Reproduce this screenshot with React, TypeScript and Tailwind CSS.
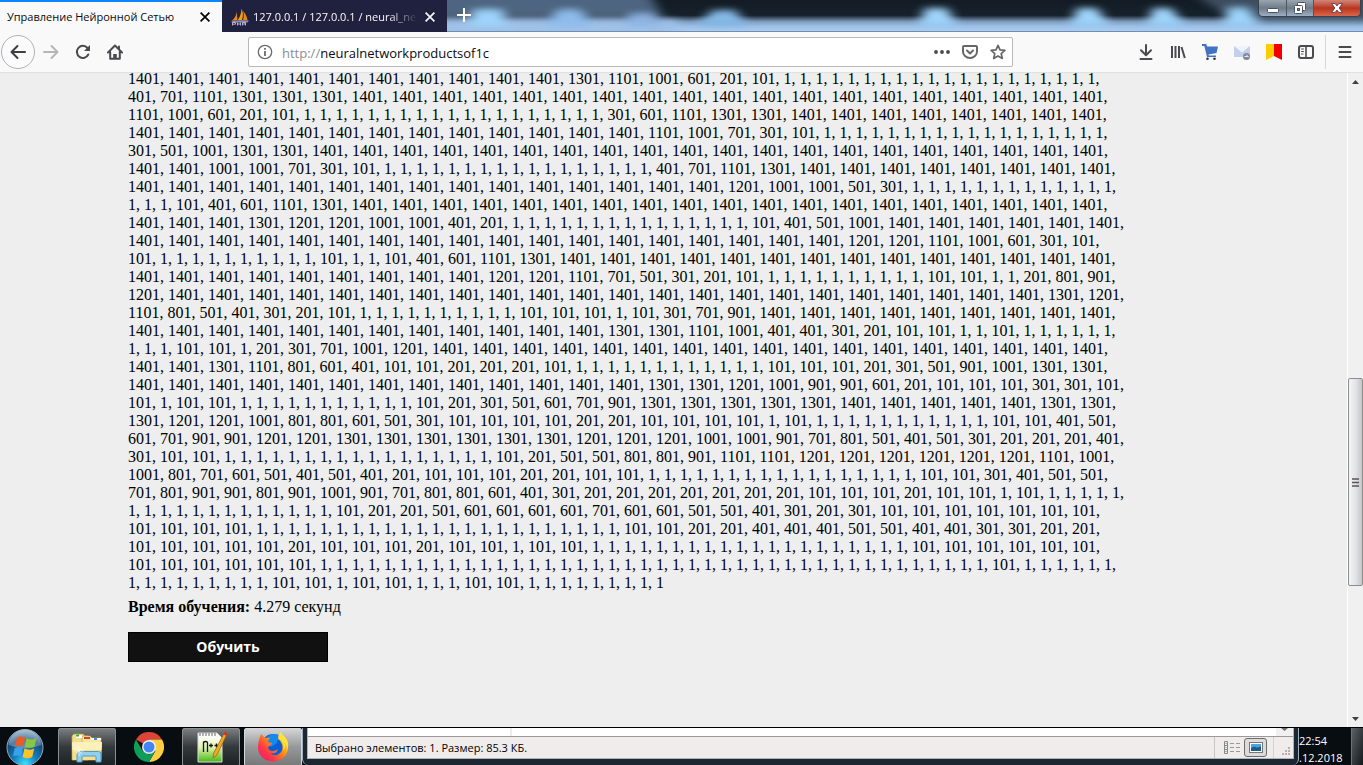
import type { ReactNode } from "react";

type Run = [value: number, count?: number];

const runs: Run[] = [
  [1401, 11], [1301], [1101], [1001], [601], [201], [101], [1, 20],
  [401], [701], [1101], [1301, 3], [1401, 19],
  [1101], [1001], [601], [201], [101], [1, 19], [301], [601], [1101], [1301, 2], [1401, 8],
  [1401, 13], [1101], [1001], [701], [301], [101], [1, 18],
  [301], [501], [1001], [1301, 2], [1401, 20],
  [1401, 2], [1001, 2], [701], [301], [101], [1, 17], [401], [701], [1101], [1301], [1401, 8],
  [1401, 15], [1201], [1001, 2], [501], [301], [1, 13],
  [1, 3], [101], [401], [601], [1101], [1301], [1401, 19],
  [1401, 3], [1301], [1201, 2], [1001, 2], [401], [201], [1, 15], [101], [401], [501], [1001], [1401, 6],
  [1401, 18], [1201, 2], [1101], [1001], [601], [301], [101],
  [101], [1, 10], [101], [1, 2], [101], [401], [601], [1101], [1301], [1401, 14],
  [1401, 9], [1201, 2], [1101], [701], [501], [301], [201], [101], [1, 10], [101, 2], [1, 2], [201], [801], [901],
  [1201], [1401, 22], [1301], [1201],
  [1101], [801], [501], [401], [301], [201], [101], [1, 10], [101, 3], [1], [101], [301], [701], [901], [1401, 9],
  [1401, 12], [1301, 2], [1101], [1001], [401, 2], [301], [201], [101, 2], [1, 2], [101], [1, 6],
  [1, 3], [101, 2], [1], [201], [301], [701], [1001], [1201], [1401, 17],
  [1401, 2], [1301], [1101], [801], [601], [401], [101, 2], [201, 3], [101], [1, 12], [101, 3], [201], [301], [501], [901], [1001], [1301, 2],
  [1401, 13], [1301, 2], [1201], [1001], [901, 2], [601], [201], [101, 3], [301, 2], [101],
  [101], [1], [101, 2], [1, 11], [101], [201], [301], [501], [601], [701], [901], [1301, 5], [1401, 5], [1301, 2],
  [1301], [1201, 2], [1001], [801, 2], [601], [501], [301], [101, 4], [201, 2], [101, 4], [1], [101], [1, 11], [101, 2], [401], [501],
  [601], [701], [901, 2], [1201, 2], [1301, 6], [1201, 3], [1001, 2], [901], [701], [801], [501], [401], [501], [301], [201, 3], [401],
  [301], [101, 2], [1, 17], [101], [201], [501, 2], [801, 2], [901], [1101, 2], [1201, 6], [1101], [1001],
  [1001], [801], [701], [601], [501], [401], [501], [401], [201], [101, 3], [201, 2], [101, 2], [1, 17], [101, 2], [301], [401], [501, 2],
  [701], [801], [901, 2], [801], [901], [1001], [901], [701], [801, 2], [601], [401], [301], [201, 7], [101, 3], [201], [101, 2], [1], [101], [1, 5],
  [1, 13], [101], [201, 2], [501], [601, 4], [701], [601, 2], [501, 2], [401], [301], [201], [301], [101, 7],
  [101, 4], [1, 23], [101, 2], [201, 2], [401, 3], [501, 2], [401, 2], [301, 2], [201, 2],
  [101, 5], [201], [101, 3], [201], [101, 2], [1], [101, 2], [1, 20], [101, 6],
  [101, 6], [1, 42], [101], [1, 6],
  [1, 9], [101, 2], [1], [101, 2], [1, 3], [101, 2], [1, 9],
];

const values = runs.flatMap(([value, count = 1]) => Array<number>(count).fill(value)).join(", ");

function CloseIcon() {
  return (
    <svg viewBox="0 0 10 10" className="size-[10px]" fill="none" stroke="currentColor" strokeWidth="1.7">
      <path d="M.6.6 9.4 9.4M9.4.6.6 9.4" />
    </svg>
  );
}

function Wallpaper() {
  return (
    <svg className="absolute inset-0 h-full w-full" viewBox="0 0 916 32" preserveAspectRatio="none" aria-hidden="true">
      <defs>
        <linearGradient id="glass" x1="0" y1="0" x2="0" y2="1">
          <stop offset="0" stopColor="#131c25" />
          <stop offset=".48" stopColor="#16212b" />
          <stop offset=".68" stopColor="#7f9fc0" />
          <stop offset=".82" stopColor="#9cc0e8" />
          <stop offset="1" stopColor="#b0cff0" />
        </linearGradient>
        <filter id="soft" x="-50%" y="-50%" width="200%" height="200%">
          <feGaussianBlur stdDeviation="6 3" />
        </filter>
      </defs>
      <rect width="916" height="32" fill="url(#glass)" />
      <g filter="url(#soft)">
        <path d="M-20-10H200L216 18H-20Z" fill="#4d6580" />
        <rect x="-20" y="20" width="250" height="20" fill="#9fc1e8" />
        <path d="M740-10H930V22H790Z" fill="#50657a" opacity=".7" />
        <g fill="#9ed4fb">
          <path d="m22 26 6-16h26l6 16z" />
          <path d="m98 26 14-16h20l14 16z" fill="#8dbbeb" />
          <path d="m176 26 8-12h22l10 12z" fill="#8db4e2" />
          <path d="m250 26 16-16h22l12 16z" fill="#84b9e6" />
          <path d="m472 26 6-18h22l10 18z" />
          <path d="m624 26 6-18h20l12 18z" />
          <path d="m700 26 6-18h18l14 18z" />
          <path d="m776 26 6-18h18l12 18z" />
        </g>
      </g>
      <rect y="31" width="916" height="1" fill="#6f8fb0" />
    </svg>
  );
}

function WindowButtons() {
  return (
    <div className="relative ml-auto mr-[2px] flex h-[17px] overflow-hidden rounded-b-[5px] border border-t-0 border-[#39434f]">
      <button aria-label="Свернуть" className="flex w-7 items-center justify-center border-r border-[#4b5663] bg-linear-to-b from-[#9aa5b1] via-[#6f7b89] to-[#9db0c4]">
        <svg viewBox="0 0 12 5" className="mt-1 h-[5px] w-3">
          <rect x=".5" y=".5" width="11" height="4" rx="1" fill="#fff" stroke="#4a5260" />
        </svg>
      </button>
      <button aria-label="Восстановить" className="flex w-[27px] items-center justify-center border-r border-[#4b5663] bg-linear-to-b from-[#9aa5b1] via-[#6f7b89] to-[#9db0c4]">
        <svg viewBox="0 0 12 12" className="size-3" fill="#fff" stroke="#4a5260">
          <rect x="3.5" y=".5" width="8" height="8" rx="1" />
          <rect x=".5" y="3.5" width="8" height="8" rx="1" />
          <rect x="3.5" y="6.5" width="2" height="2" fill="#7d8b9a" />
        </svg>
      </button>
      <button aria-label="Закрыть" className="flex w-[46px] items-center justify-center bg-linear-to-b from-[#cf8678] via-[#b8341c] to-[#d9664c]">
        <svg viewBox="0 0 12 10" className="h-[10px] w-3">
          <path d="M.6.6h3.6L6 2.9 7.8.6h3.6L8.2 5l3.2 4.400H7.800L6 7.100 4.200 9.400H.6L3.800 5z" fill="#fff" stroke="#5c3a40" strokeWidth=".9" />
        </svg>
      </button>
    </div>
  );
}

function TitleBar() {
  return (
    <header className="flex h-8 shrink-0">
      <div className="flex w-[222px] shrink-0 items-center justify-between border-t-2 border-[#0a84ff] bg-[#f9f9fa] pl-[7px] pr-3">
        <span className="whitespace-nowrap text-[11px] leading-4 text-[#0c0c0d]">Управление Нейронной Сетью</span>
        <button aria-label="Закрыть вкладку"><CloseIcon /></button>
      </div>
      <div className="flex w-[225px] shrink-0 items-center bg-[#20213f] pl-2 pr-3 pt-[2px] text-[#f9f9fa]">
        <svg viewBox="0 0 20 18" className="h-[18px] w-5 shrink-0" aria-hidden="true">
          <path d="M6.500 1.500c.6 4-.6 7.500-4.700 11.500l5.700-1z" fill="#e5871f" />
          <path d="M11.500.5c1.500 3.500 2 7 .5 11.500H7.800c2.600-3.700 3.500-7 3.700-11.500z" fill="#f89c0e" />
          <path d="M13 3c2.500 2.500 4 5.500 4.500 9H13c1-3 1-6 0-9z" fill="#e98412" />
          <path d="M1 13.500c5-1.500 12-1.500 18-1l-1.500 2H2z" fill="#8d8fae" />
          <path d="M2.500 17.500v-3h3v1.700h-3m5 1.300v-3m0 1.500h3m0-1.500v3m2 0v-3h3v3m-3-1.500h3" fill="none" stroke="#b5b6cc" />
        </svg>
        <span className="ml-[3px] min-w-0 flex-1 overflow-hidden whitespace-nowrap text-[11px] font-medium leading-4 [mask-image:linear-gradient(to_right,#000_82%,transparent)]">
          127.0.0.1 / 127.0.0.1 / neural_net
        </span>
        <button aria-label="Закрыть вкладку" className="ml-[7px]"><CloseIcon /></button>
      </div>
      <div className="relative flex flex-1 items-start overflow-hidden">
        <Wallpaper />
        <button aria-label="Новая вкладка" className="relative ml-[10px] mt-2">
          <svg viewBox="0 0 14 14" className="size-[14px]" stroke="#fff" strokeWidth="2">
            <path d="M7 0v14M0 7h14" />
          </svg>
        </button>
        <WindowButtons />
      </div>
    </header>
  );
}

function ToolButton({ label, className = "w-8", children }: { label: string; className?: string; children: ReactNode }) {
  return (
    <button aria-label={label} className={`flex h-8 shrink-0 items-center justify-center text-[#4a4a4f] ${className}`}>
      <svg viewBox="0 0 16 16" className="size-4" fill="none" stroke="currentColor" strokeWidth="2" strokeLinecap="round" strokeLinejoin="round">
        {children}
      </svg>
    </button>
  );
}

function Toolbar() {
  return (
    <nav className="flex h-[41px] shrink-0 items-center border-b border-[#e0e0e1] bg-[#f9f9fa]">
      <button aria-label="Назад" className="ml-px flex size-[34px] shrink-0 items-center justify-center rounded-full border border-[#b1b1b3] bg-[#fbfbfb] text-[#3d3d42]">
        <svg viewBox="0 0 16 16" className="size-4" fill="none" stroke="currentColor" strokeWidth="2" strokeLinecap="round" strokeLinejoin="round">
          <path d="M15 8H1.500M7.500 2 1.500 8l6 6" />
        </svg>
      </button>
      <ToolButton label="Вперёд"><path d="M1 8h13.500M8.500 2l6 6-6 6" stroke="#b6b6b9" /></ToolButton>
      <ToolButton label="Обновить">
        <path d="M13.300 10.500A6 6 0 1 1 12.500 4" />
        <path d="M15 1v6H9z" fill="currentColor" stroke="none" />
      </ToolButton>
      <ToolButton label="Домой">
        <path d="M1 8.500 8 1.500l7 7M3.200 8v6.800h9.600V8" />
        <path d="M6.200 15v-5h3.600v5z" fill="currentColor" stroke="none" />
        <path d="M12 2.500v2" />
      </ToolButton>

      <div className="mx-[117px] flex h-[30px] min-w-0 flex-1 items-center rounded-[2px] border border-[#b9b9bb] bg-white">
        <button aria-label="Сведения о сайте" className="ml-2 shrink-0 text-[#6a6a6e]">
          <svg viewBox="0 0 16 16" className="size-4" fill="none" stroke="currentColor" strokeWidth="1.300">
            <circle cx="8" cy="8" r="6.700" />
            <path d="M8 7v5" strokeWidth="1.800" />
            <path d="M8 4v1.800" strokeWidth="1.800" />
          </svg>
        </button>
        <label htmlFor="address" className="ml-[9px] pt-[2px] text-[13px] leading-5 text-[#8c8c90]">http://</label>
        <input
          id="address"
          className="min-w-0 flex-1 bg-transparent pt-[2px] text-[13px] leading-5 text-[#0c0c0d] outline-none"
          defaultValue="neuralnetworkproductsof1c"
        />
        <ToolButton label="Действия на странице" className="w-7">
          <g fill="currentColor" stroke="none">
            <circle cx="2" cy="8" r="1.900" /><circle cx="8" cy="8" r="1.900" /><circle cx="14" cy="8" r="1.900" />
          </g>
        </ToolButton>
        <ToolButton label="Сохранить в Pocket" className="w-7">
          <g stroke="#66666b">
            <path d="M2 2h12q1 0 1 1v4.500a7 6.500 0 0 1-14 0V3q0-1 1-1z" />
            <path d="M5 6.500l3 3 3-3" />
          </g>
        </ToolButton>
        <ToolButton label="Добавить в закладки" className="w-7">
          <path d="m8 1.300 2 4.500 4.900.5-3.700 3.300 1.100 4.900L8 12l-4.300 2.500 1.100-4.900L1.100 6.300 6 5.800z" stroke="#66666b" strokeWidth="1.700" />
        </ToolButton>
      </div>

      <ToolButton label="Загрузки"><path d="M8 1v9.500M3 6.300l5 5 5-5M2.500 15h11" /></ToolButton>
      <ToolButton label="Библиотека"><path d="M2 2v12M5.500 2v12M9 2v12M11.500 3l3.300 11" strokeLinecap="butt" /></ToolButton>
      <ToolButton label="Покупки">
        <g stroke="none">
          <path d="M0 0h4.200l1 2.500H16L14.500 9l-8 1.500.3 1H14V13H5L2.300 2H0z" fill="#4374c1" />
          <circle cx="5.500" cy="14.700" r="1.300" fill="#333" /><circle cx="12.500" cy="14.700" r="1.300" fill="#333" />
        </g>
      </ToolButton>
      <ToolButton label="Почта">
        <g stroke="none">
          <path d="M0 2h16v11H0z" fill="#c3cfec" />
          <path d="M0 2h16L8 8.500z" fill="#eff3fd" />
          <circle cx="12.500" cy="12.500" r="3.500" fill="#7e879c" />
        </g>
        <path d="M10.800 12.500h3.400M12.500 11l1.600 1.500" stroke="#e8ebf3" strokeWidth="1" />
      </ToolButton>
      <ToolButton label="Закладки">
        <g stroke="none"><path d="M0 0h8v12l-8 4z" fill="#fc0" /><path d="M8 0h8v16l-8-4z" fill="#f20000" /></g>
      </ToolButton>
      <ToolButton label="Боковая панель">
        <rect x="1" y="2" width="14" height="12" rx="2" />
        <path d="M8 2v12" strokeWidth="1.600" />
        <path d="M3.500 5h2M3.500 7.500h2M3.500 10h1.500" strokeWidth="1" />
      </ToolButton>
      <div className="ml-[3px] h-[34px] w-px shrink-0 bg-[#d7d7db]" />
      <ToolButton label="Меню" className="ml-[3px] mr-[2px] w-8">
        <path d="M2.500 3h11M2.500 8h11M2.500 13h11" />
      </ToolButton>
    </nav>
  );
}

function ScrollArrow({ down = false }: { down?: boolean }) {
  return (
    <button aria-label={down ? "Прокрутить вниз" : "Прокрутить вверх"} className="flex h-[17px] w-full shrink-0 items-center justify-center">
      <svg viewBox="0 0 7 4" className="h-1 w-[7px]" fill="#404040">
        {down ? <path d="M0 0h7L3.500 4z" /> : <path d="M0 4h7L3.500 0z" />}
      </svg>
    </button>
  );
}

function ScrollBar() {
  return (
    <div className="flex w-4 shrink-0 flex-col border-l border-white bg-[#f0f0f1]">
      <ScrollArrow />
      <div className="flex-[288]" />
      <div className="flex h-[208px] shrink-0 items-center justify-center rounded-[2px] border border-[#8e8e8f] bg-linear-to-r from-[#f4f4f5] via-[#e3e4e6] to-[#c3c5ca]">
        <svg viewBox="0 0 7 9" className="h-[9px] w-[7px]" stroke="#555" strokeWidth="1.500">
          <path d="M0 1h7M0 4.500h7M0 8h7" />
        </svg>
      </div>
      <div className="flex-[124]" />
      <ScrollArrow down />
    </div>
  );
}

function Page() {
  return (
    <div className="flex min-h-0 flex-1 bg-[#eee]">
      <main className="flex min-w-0 flex-1 flex-col justify-end overflow-hidden pb-[65px] pl-32 font-['Liberation_Serif',serif] text-[16px] leading-[18px] text-black">
        <p className="max-w-[1000px]">{values}</p>
        <p className="mt-[6px]"><b>Время обучения:</b> 4.279 секунд</p>
        <button className="mt-4 h-[30px] w-[200px] shrink-0 border border-black bg-[#111] font-['Open_Sans',sans-serif] text-[14px] font-bold leading-5 text-white">
          Обучить
        </button>
      </main>
      <ScrollBar />
    </div>
  );
}

function StartOrb() {
  return (
    <svg viewBox="0 0 38 38" className="size-[38px]" aria-hidden="true">
      <defs>
        <radialGradient id="orb" cx=".5" cy=".95" r=".95">
          <stop offset="0" stopColor="#3fe0ff" />
          <stop offset=".35" stopColor="#1380c0" />
          <stop offset=".7" stopColor="#164a78" />
          <stop offset="1" stopColor="#8fb4cd" />
        </radialGradient>
      </defs>
      <circle cx="19" cy="19.500" r="18" fill="url(#orb)" stroke="#8fa9b8" />
      <path d="M3 17a16 15 0 0 1 32 0Q19 24 3 17z" fill="#fff" opacity=".28" />
      <path d="M11 9.500q4-2 8 0l-1.800 9q-4-2-8.200-.3z" fill="#ee5a24" />
      <path d="M20.500 10.200q5 2.800 10-.2l-2 8.500q-5 2.500-9.800.3z" fill="#8bc63f" />
      <path d="M8.700 20q4-1.800 8.200.2l-1.700 8.300q-4-2-8.200-.2z" fill="#3aa0e8" />
      <path d="M18.400 20.600q5 2.400 9.800-.2l-2 8.600q-5 2.500-9.600 0z" fill="#ffc423" />
    </svg>
  );
}

function FoldersIcon() {
  return (
    <svg viewBox="0 0 34 32" className="h-8 w-[34px]" aria-hidden="true">
      <path d="M4 3h9l2 2h3v24H2V5z" fill="#f3dd8a" stroke="#c3a450" strokeWidth=".7" />
      <path d="M12 5h8l2 2h9v22H12z" fill="#f8e7a4" stroke="#c3a450" strokeWidth=".7" />
      <path d="M6 4h6v3H6z" fill="#fff" /><path d="M6 3.500h3v2H6z" fill="#36b33a" />
      <path d="M14 6h6v2h-6z" fill="#d5452e" />
      <path d="M21 7h10v2H21z" fill="#fff" /><path d="M24 7h3v2h-3z" fill="#3c8fd8" />
      <path d="M2 11h30l-1 18H3z" fill="#f5df8f" />
      <path d="M2 11h30l-.5 8H2.500z" fill="#fdf0b9" />
      <path d="M7 31V23q0-2.500 2.500-2.500h19q2.500 0 2.500 2.500v8h-5v-5q0-1-1-1H13q-1 0-1 1v5z" fill="#93cfee" stroke="#4c9cc8" />
      <path d="M9 15v10M4 20h10M6 17l6 6M12 17l-6 6" stroke="#fff" strokeWidth=".8" opacity=".8" />
    </svg>
  );
}

function ChromeIcon() {
  return (
    <svg viewBox="0 0 30 30" className="size-[30px]" aria-hidden="true">
      <path d="M15 15 2 7.500A15 15 0 0 1 28 7.500H15z" fill="#db4437" />
      <path d="M15 15 15 7.500H28A15 15 0 0 1 15 30l6.500-11.300z" fill="#ffcd40" />
      <path d="M2 7.500 8.500 18.800 15 22.500 21.500 18.700 15 30A15 15 0 0 1 2 7.500z" fill="#0f9d58" />
      <circle cx="15" cy="15" r="7" fill="#f1f1f1" />
      <circle cx="15" cy="15" r="5.500" fill="#4285f4" />
    </svg>
  );
}

function NotepadIcon() {
  return (
    <svg viewBox="0 0 32 32" className="size-8" aria-hidden="true">
      <defs>
        <linearGradient id="pad" x1="0" y1="0" x2="0" y2="1">
          <stop offset=".1" stopColor="#fff" /><stop offset=".5" stopColor="#e0f3ae" /><stop offset="1" stopColor="#46b814" />
        </linearGradient>
      </defs>
      <path d="M3 2h19l5 5v24H3z" fill="url(#pad)" stroke="#d8dcd4" />
      <path d="M5 2v3M8 2v3M11 2v3M14 2v3M17 2v3M20 2v3" stroke="#666" />
      <path d="M8.500 21V10.500M8.500 12q0-1.500 2-1.500t2 1.500v9" fill="none" stroke="#151515" strokeWidth="1.300" />
      <path d="M14 14.500h4M16 12.500v4M19.500 14.500h4M21.500 12.500v4" fill="none" stroke="#151515" strokeWidth="1.300" />
      <path d="M29.500 1.500 32 3 22 24l-4 3 .5-4.500z" fill="#f1a922" stroke="#8b5b10" strokeWidth=".7" />
      <path d="m28.500 3 1.500-2.500 2.500 1.500L31 5z" fill="#cf3434" />
    </svg>
  );
}

function FirefoxIcon() {
  return (
    <svg viewBox="0 0 32 32" className="size-8" aria-hidden="true">
      <defs>
        <linearGradient id="fox" x1="1" y1="0" x2="0" y2="1">
          <stop offset=".1" stopColor="#fff34f" /><stop offset=".4" stopColor="#ff980e" />
          <stop offset=".7" stopColor="#ff3647" /><stop offset="1" stopColor="#e31587" />
        </linearGradient>
      </defs>
      <circle cx="16" cy="14" r="11" fill="#0a5fd8" />
      <path d="M9 8q5-7 13-4l-2 8-6 4z" fill="#1489f0" />
      <path d="M2 9 4 3l4 4q3-1 5 0-2 2-2 4l4 1q0 2-4 4 0 4 5 4 3 0 5-2-2 6-8 4 4 4 9 1 5-3 3-10-1-3-4-5 0-5 3-7 1 4 4 6t3 9a15 14 0 0 1-30 1q0-4 1-8z" fill="url(#fox)" />
      <path d="M24 1q-3 3-2 6 6 5 4 13 3-3 2-9 3 4 1 10 5-8-1-15-3-2-4-5z" fill="#ffe23a" />
    </svg>
  );
}

function TaskButton({ label, className, children }: { label: string; className: string; children: ReactNode }) {
  return (
    <button aria-label={label} className={`flex h-[38px] shrink-0 items-center justify-center ${className}`}>
      {children}
    </button>
  );
}

function Taskbar() {
  return (
    <footer className="flex h-[38px] shrink-0 overflow-hidden border-t border-black bg-[#080d12]">
      <TaskButton label="Пуск" className="w-[50px]"><StartOrb /></TaskButton>
      <TaskButton label="Проводник" className="ml-2 w-[58px] rounded-[2px] border border-[#8b8f92] bg-linear-to-b from-[#7b7e80] via-[#34393c] to-[#1d2225]"><FoldersIcon /></TaskButton>
      <TaskButton label="Google Chrome" className="w-[66px]"><ChromeIcon /></TaskButton>
      <TaskButton label="Notepad++" className="w-[58px] rounded-[2px] border border-[#8b8f92] bg-linear-to-b from-[#7b7e80] via-[#34393c] to-[#1d2225]"><NotepadIcon /></TaskButton>
      <TaskButton label="Firefox" className="ml-1 w-[58px] rounded-[2px] border border-[#d5d7d8] bg-linear-to-b from-[#d3d4d5] via-[#96989a] to-[#77797b]"><FirefoxIcon /></TaskButton>
      <section className="flex min-w-0 flex-1 flex-col rounded-b-[6px] border-x border-[#9db0c2] bg-[#1c2731] px-1 pb-[6px]">
        <div className="flex min-h-0 flex-1 flex-col border border-t-0 border-[#aab4bd] bg-[#f0ecec]">
          <div className="flex h-2 shrink-0 bg-white">
            <div className="ml-[202px] w-[2px] bg-[#ececec]" />
            <div className="ml-auto flex w-[17px] justify-center bg-[#f1f1f1]">
              <svg viewBox="0 0 7 4" className="h-1 w-[7px]" fill="#707070"><path d="M0 0h7L3.500 3z" /></svg>
            </div>
          </div>
          <div className="flex min-h-0 flex-1 items-center border-t border-[#9a9a9a] pl-[7px]">
            <span className="flex-1 whitespace-nowrap text-[11px] leading-4 text-black">Выбрано элементов: 1. Размер: 85.3 КБ.</span>
            <div className="h-full w-px bg-[#c9c5c5]" />
            <button aria-label="Таблица" className="ml-[9px]">
              <svg viewBox="0 0 16 13" className="h-[13px] w-4" fill="none">
                <path d="M.5.5h3v12h-3zM.5 4.500h3M.5 8.500h3" stroke="#888" />
                <path d="M6 2.500h4M12 2.500h4M6 6.500h4M12 6.500h4M6 10.500h4M12 10.500h4" stroke="#999" />
                <path d="M1.500 2.500h1" stroke="#3a8" /><path d="M1.500 6.500h1" stroke="#d83" /><path d="M1.500 10.500h1" stroke="#28c" />
              </svg>
            </button>
            <button aria-label="Крупные значки" className="ml-1 flex h-[19px] w-[23px] items-center justify-center rounded-[3px] border border-[#6d6d6d] bg-[#dcdada]">
              <svg viewBox="0 0 14 11" className="h-[11px] w-[14px]">
                <rect x=".5" y=".5" width="13" height="10" fill="#fff" stroke="#777" />
                <path d="M2 2h10v7H2z" fill="#49a6df" /><path d="M2 6l3-1.500 3 1 4-1V9H2z" fill="#1c5d88" />
              </svg>
            </button>
            <div className="ml-[6px] h-full w-px bg-[#d5d1d1]" />
            <svg viewBox="0 0 9 9" className="ml-2 mr-[2px] mt-2 size-[9px]" fill="#b5b1b1" aria-hidden="true">
              <path d="M6 0h2v2H6zM3 3h2v2H3zM6 3h2v2H6zM0 6h2v2H0zM3 6h2v2H3zM6 6h2v2H6z" />
            </svg>
          </div>
        </div>
      </section>
      <div className="w-[52px] shrink-0 pt-1 text-[11px] leading-[17px] text-white">
        <time className="block">22:54</time>
        <time className="block">.12.2018</time>
      </div>
      <button aria-label="Показать рабочий стол" className="w-3 shrink-0 border-l border-[#6c7276] bg-linear-to-br from-[#5b6266] to-[#14191c]" />
    </footer>
  );
}

export default function App() {
  return (
    <div className="flex h-screen flex-col overflow-hidden font-['Open_Sans',sans-serif]">
      <TitleBar />
      <Toolbar />
      <Page />
      <Taskbar />
    </div>
  );
}
